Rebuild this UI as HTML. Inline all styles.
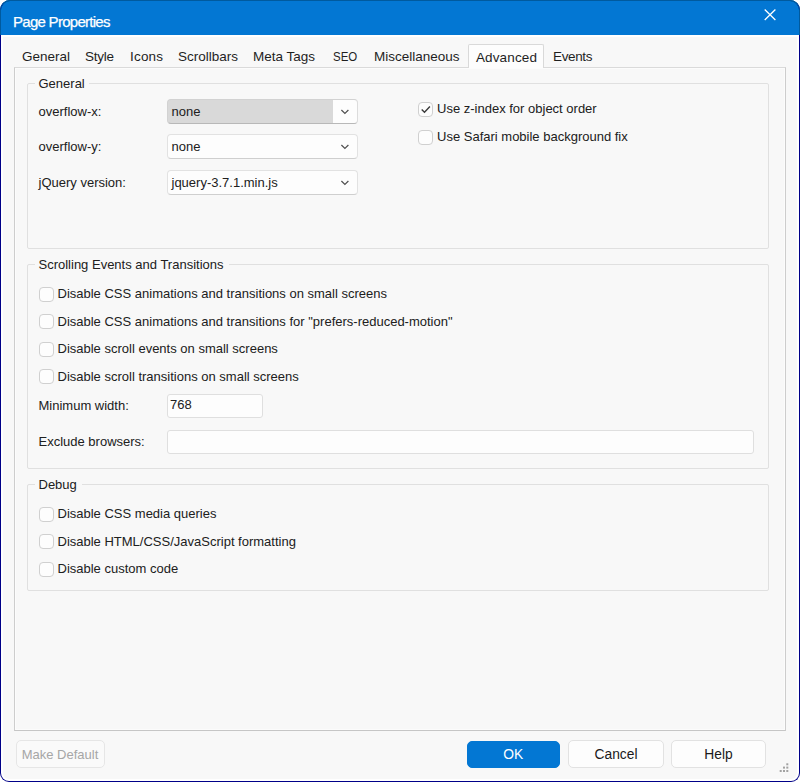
<!DOCTYPE html>
<html>
<head>
<meta charset="utf-8">
<title>Page Properties</title>
<style>
html,body{margin:0;padding:0;background:#fff;}
body{width:800px;height:782px;overflow:hidden;position:relative;font-family:"Liberation Sans",sans-serif;font-size:13px;color:#202020;}
*{box-sizing:border-box;}
.abs{position:absolute;}
#win{position:absolute;left:0;top:0;width:800px;height:782px;border-radius:10px 10px 9px 9px;background:#fff;overflow:hidden;}
#client{position:absolute;left:3px;top:37px;width:794px;height:742px;background:#f8f8f8;border-radius:0 0 6px 6px;}
#frame{position:absolute;left:0;top:0;width:800px;height:782px;border-radius:10px 10px 9px 9px;border:1px solid #000088;border-top-color:#005a9e;pointer-events:none;}
#frame2{position:absolute;left:0;top:0;width:800px;height:35px;border:1px solid #005a9e;border-bottom:none;border-radius:10px 10px 0 0;pointer-events:none;}
#title{position:absolute;left:0;top:0;width:800px;height:35px;background:#0377d3;}
#title .cap{position:absolute;left:13px;top:12px;font-size:15px;line-height:20px;color:#fff;letter-spacing:-0.72px;white-space:nowrap;-webkit-text-stroke:0.25px #fff;}
.tab{position:absolute;top:48px;transform-origin:0 50%;font-size:13.5px;line-height:18px;white-space:nowrap;color:#1f1f1f;}
#panel{position:absolute;left:14px;top:67px;width:772px;height:664px;border:1px solid #cdcdcd;border-top-color:#dadada;border-bottom-color:#c6c6c6;box-shadow:inset 0 0 0 1px #fcfcfc;background:#f8f8f8;}
#seltab{position:absolute;left:468px;top:44px;width:76px;height:24px;border:1px solid #d9d9d9;border-bottom:none;background:#fdfdfd;border-radius:2px 2px 0 0;}
.grp{position:absolute;left:27px;width:742px;border:1px solid #e0e0e0;border-radius:2px;}
.leg{position:absolute;left:35px;background:#f8f8f8;padding:0 0 0 3.5px;line-height:16px;white-space:nowrap;}
.lbl{position:absolute;left:38.5px;line-height:16px;white-space:nowrap;}
.cb{position:absolute;width:15px;height:15px;border:1px solid #d0d0d0;border-radius:4px;background:#fdfdfd;}
.cbt{position:absolute;line-height:16px;white-space:nowrap;}
.combo{position:absolute;left:167px;width:191px;height:25px;border:1px solid #e2e2e2;border-bottom-color:#cfcfcf;border-radius:4px;background:#fdfdfd;overflow:hidden;}
.combo .txt{position:absolute;left:3.5px;top:4px;line-height:16px;white-space:nowrap;}
.combo svg{position:absolute;left:171.8px;top:8.5px;}
.inp{position:absolute;left:167px;height:24px;border:1px solid #dfdfdf;border-radius:3px;background:#fdfdfd;}
.btn{position:absolute;top:740px;height:28px;border:1px solid #e2e2e2;border-radius:5px;background:#fdfdfd;text-align:center;font-size:13.8px;line-height:28px;color:#1a1a1a;}
</style>
</head>
<body>
<div id="win">
  <div id="title"><div class="cap">Page Properties</div>
    <svg class="abs" style="left:763px;top:8px" width="14" height="14" viewBox="0 0 14 14"><path d="M1.7 1.5 L12.4 12 M12.4 1.5 L1.7 12" stroke="#fff" stroke-width="1.3" fill="none"/></svg>
  </div>

  <div id="client"></div>
  <div id="panel"></div>
  <div id="seltab"></div>

  <div class="tab" style="left:22px">General</div>
  <div class="tab" style="left:85px;letter-spacing:-0.25px">Style</div>
  <div class="tab" style="left:130px;letter-spacing:0.2px">Icons</div>
  <div class="tab" style="left:178px">Scrollbars</div>
  <div class="tab" style="left:253px">Meta Tags</div>
  <div class="tab" style="left:333px;transform:scaleX(0.85)">SEO</div>
  <div class="tab" style="left:374px">Miscellaneous</div>
  <div class="tab" style="left:476px;top:49px;letter-spacing:0.12px">Advanced</div>
  <div class="tab" style="left:553px;letter-spacing:-0.35px">Events</div>

  <!-- Group 1 -->
  <div class="grp" style="top:83px;height:166px"></div>
  <div class="leg" style="top:76px;width:54px">General</div>
  <div class="lbl" style="top:104px">overflow-x:</div>
  <div class="lbl" style="top:139px">overflow-y:</div>
  <div class="lbl" style="top:175px">jQuery version:</div>

  <div class="combo" style="top:99px;background:#d9d9d9;border-color:#d2d2d2 #dcdcdc #b8b8b8 #d2d2d2">
    <div class="abs" style="left:165px;top:0;width:25px;height:23px;background:#fdfdfd"></div>
    <div class="txt">none</div>
    <svg width="10" height="6" viewBox="0 0 10 6"><path d="M1.4 1 L4.9 4.5 L8.4 1" stroke="#505050" stroke-width="1.2" fill="none"/></svg>
  </div>
  <div class="combo" style="top:134px">
    <div class="txt">none</div>
    <svg width="10" height="6" viewBox="0 0 10 6"><path d="M1.4 1 L4.9 4.5 L8.4 1" stroke="#505050" stroke-width="1.2" fill="none"/></svg>
  </div>
  <div class="combo" style="top:170px">
    <div class="txt">jquery-3.7.1.min.js</div>
    <svg width="10" height="6" viewBox="0 0 10 6"><path d="M1.4 1 L4.9 4.5 L8.4 1" stroke="#505050" stroke-width="1.2" fill="none"/></svg>
  </div>

  <div class="cb" style="left:418px;top:102px"><svg class="abs" style="left:1px;top:1px" width="11" height="11" viewBox="0 0 11 11"><path d="M1.7 5.5 L4.5 8.3 L9.9 2.6" stroke="#3a3a3a" stroke-width="1.4" fill="none"/></svg></div>
  <div class="cbt" style="left:437px;top:101px">Use z-index for object order</div>
  <div class="cb" style="left:418px;top:130px"></div>
  <div class="cbt" style="left:437px;top:129px">Use Safari mobile background fix</div>

  <!-- Group 2 -->
  <div class="grp" style="top:264px;height:205px"></div>
  <div class="leg" style="top:257px;width:194px">Scrolling Events and Transitions</div>
  <div class="cb" style="left:39px;top:287px"></div>
  <div class="cbt" style="left:57.5px;top:286px">Disable CSS animations and transitions on small screens</div>
  <div class="cb" style="left:39px;top:314px"></div>
  <div class="cbt" style="left:57.5px;top:314px">Disable CSS animations and transitions for "prefers-reduced-motion"</div>
  <div class="cb" style="left:39px;top:342px"></div>
  <div class="cbt" style="left:57.5px;top:341px">Disable scroll events on small screens</div>
  <div class="cb" style="left:39px;top:369px"></div>
  <div class="cbt" style="left:57.5px;top:369px">Disable scroll transitions on small screens</div>
  <div class="lbl" style="top:398px">Minimum width:</div>
  <div class="inp" style="top:394px;width:96px"><div class="abs" style="left:2px;top:2px;line-height:16px">768</div></div>
  <div class="lbl" style="top:434px">Exclude browsers:</div>
  <div class="inp" style="top:430px;width:587px"></div>

  <!-- Group 3 -->
  <div class="grp" style="top:484px;height:107px"></div>
  <div class="leg" style="top:477px;width:47px">Debug</div>
  <div class="cb" style="left:39px;top:507px"></div>
  <div class="cbt" style="left:57.5px;top:506px">Disable CSS media queries</div>
  <div class="cb" style="left:39px;top:534px"></div>
  <div class="cbt" style="left:57.5px;top:534px">Disable HTML/CSS/JavaScript formatting</div>
  <div class="cb" style="left:39px;top:562px"></div>
  <div class="cbt" style="left:57.5px;top:561px">Disable custom code</div>

  <!-- Buttons -->
  <div class="btn" style="left:15.5px;width:89px;font-size:13px;color:#a6a6a6;border-color:#e6e6e6;background:#fafafa">Make Default</div>
  <div class="btn" style="left:466.5px;width:93.5px;top:740.5px;height:27.3px;line-height:26.5px;background:#0377d3;border-color:#0377d3;color:#fff">OK</div>
  <div class="btn" style="left:568px;width:96px">Cancel</div>
  <div class="btn" style="left:671px;width:95px">Help</div>

  <!-- resize grip -->
  <svg class="abs" style="left:778px;top:761px" width="14" height="14" viewBox="0 0 14 14" fill="#a2a2a2">
    <rect x="8.3" y="2.3" width="2" height="2"/>
    <rect x="5" y="5.6" width="2" height="2"/><rect x="8.3" y="5.6" width="2" height="2"/>
    <rect x="1.7" y="9" width="2" height="2"/><rect x="5" y="9" width="2" height="2"/><rect x="8.3" y="9" width="2" height="2"/>
  </svg>
</div>
<div id="frame"></div>
<div id="frame2"></div>
</body>
</html>
